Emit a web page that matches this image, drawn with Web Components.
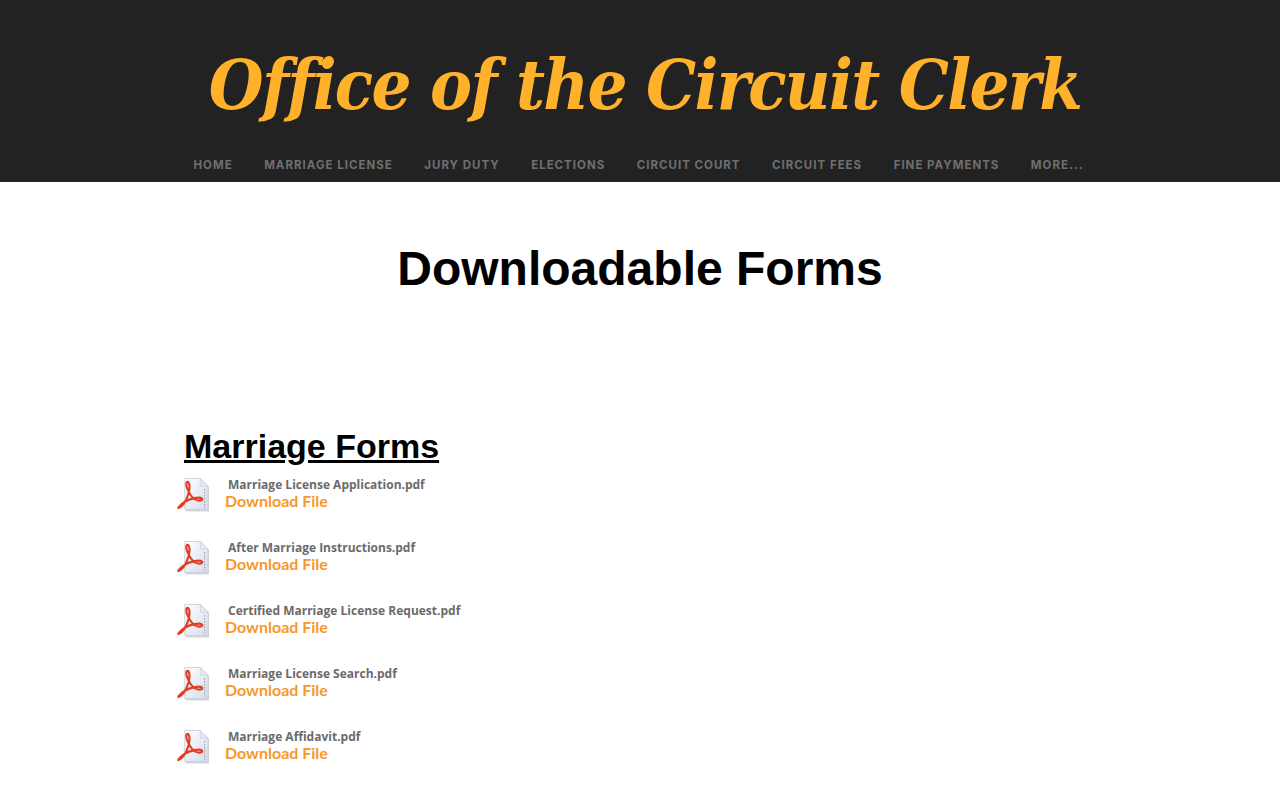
<!DOCTYPE html>
<html lang="en"><head><meta charset="utf-8"><title>Downloadable Forms</title>
<style>html,body{margin:0;padding:0;background:#fff}body{height:800px;overflow:hidden}</style>
</head><body>
<site-header></site-header>
<page-title>Downloadable Forms</page-title>
<form-section heading="Marriage Forms">
<file-row name="Marriage License Application.pdf"></file-row>
<file-row name="After Marriage Instructions.pdf"></file-row>
<file-row name="Certified Marriage License Request.pdf"></file-row>
<file-row name="Marriage License Search.pdf"></file-row>
<file-row name="Marriage Affidavit.pdf"></file-row>
</form-section>
<script>
class SiteHeader extends HTMLElement{constructor(){super();this.attachShadow({mode:'open'}).innerHTML=`<style>
:host{display:block;background:#222;height:182px;box-sizing:border-box;overflow:hidden}
h1{margin:0;padding:44px 0 0 10px;text-align:center;font:italic 700 70px/82px "DejaVu Serif Condensed","DejaVu Serif",serif;font-stretch:condensed;color:#ffb12b;white-space:nowrap;letter-spacing:-1.7px}
nav{display:flex;justify-content:center;gap:31.5px;margin-top:32px;padding-right:3px;font:700 11.5px/14px Inter,"Liberation Sans",sans-serif;letter-spacing:1px;color:#6f6f6f}
</style><h1>Office of the Circuit Clerk</h1><nav><span>HOME</span><span>MARRIAGE LICENSE</span><span>JURY DUTY</span><span>ELECTIONS</span><span>CIRCUIT COURT</span><span>CIRCUIT FEES</span><span>FINE PAYMENTS</span><span>MORE...</span></nav>`}}
class PageTitle extends HTMLElement{constructor(){super();this.attachShadow({mode:'open'}).innerHTML=`<style>
:host{display:block;text-align:center;padding-top:58px;font:700 48px/58px "Liberation Sans",Arial,sans-serif;color:#000}
</style><slot></slot>`}}
class FormSection extends HTMLElement{constructor(){super();this.attachShadow({mode:'open'}).innerHTML=`<style>
:host{display:block;padding:128px 0 0 177px}
h2{margin:0 0 8px 7px;font:700 34px/40px "Liberation Sans",Arial,sans-serif;color:#000;text-decoration:underline}
.list{display:flex;flex-direction:column;gap:23px}
</style><h2></h2><div class="list"><slot></slot></div>`;this.shadowRoot.querySelector('h2').textContent=this.getAttribute('heading')}}
class FileRow extends HTMLElement{constructor(){super();this.attachShadow({mode:'open'}).innerHTML=`<style>
:host{display:flex;height:40px;align-items:flex-start}
svg{width:33px;height:38px;flex:none;margin:1px 1px 0 0}
.t{margin-left:14px}
.n{margin-left:3px;font:700 12px/16px "Open Sans","Liberation Sans",sans-serif;color:#6b6b6b;white-space:nowrap;padding-top:3px}
a{display:block;font:700 16px/16px Lato,"Liberation Sans",sans-serif;color:#f7982c;white-space:nowrap}
</style><svg viewBox="0 0 34 38"><defs><linearGradient id="g" x1="0" y1="0" x2="1" y2="1"><stop offset="0" stop-color="#fff"/><stop offset="1" stop-color="#d5dcea"/></linearGradient></defs>
<path d="M8 3h16l8 8v25H8z" fill="#bfc6d2" transform="translate(1 1)" opacity=".7"/>
<path d="M8 3h16l8 8v24H8z" fill="url(#g)" stroke="#c4cad6" stroke-width=".8"/>
<path d="M24 3l8 8h-8z" fill="#e4e9f3" stroke="#c4cad6" stroke-width=".6"/>
<path d="M28.500 14v19" stroke="#8a93a6" stroke-width="1" stroke-dasharray="1.500 1.500"/>
<path d="M1.500 33.500c4.500-1.500 8-7 10.500-15.500 1-4 1.300-9.500-.7-11.500-2.300-.5-2.300 4 0 8.500 2.500 5.500 6 9.800 9.500 10.500 3.500.7 6.500 0 4.700-2-2-1.600-11.500-.4-18 3.800C4 29.500 .5 33.500 1.500 33.500z" fill="none" stroke="#e23d22" stroke-width="2.200" stroke-linejoin="round"/>
</svg><div class="t"><div class="n"></div><a>Download File</a></div>`;this.shadowRoot.querySelector('.n').textContent=this.getAttribute('name')}}
customElements.define('site-header',SiteHeader);customElements.define('page-title',PageTitle);customElements.define('form-section',FormSection);customElements.define('file-row',FileRow);
</script></body></html>
